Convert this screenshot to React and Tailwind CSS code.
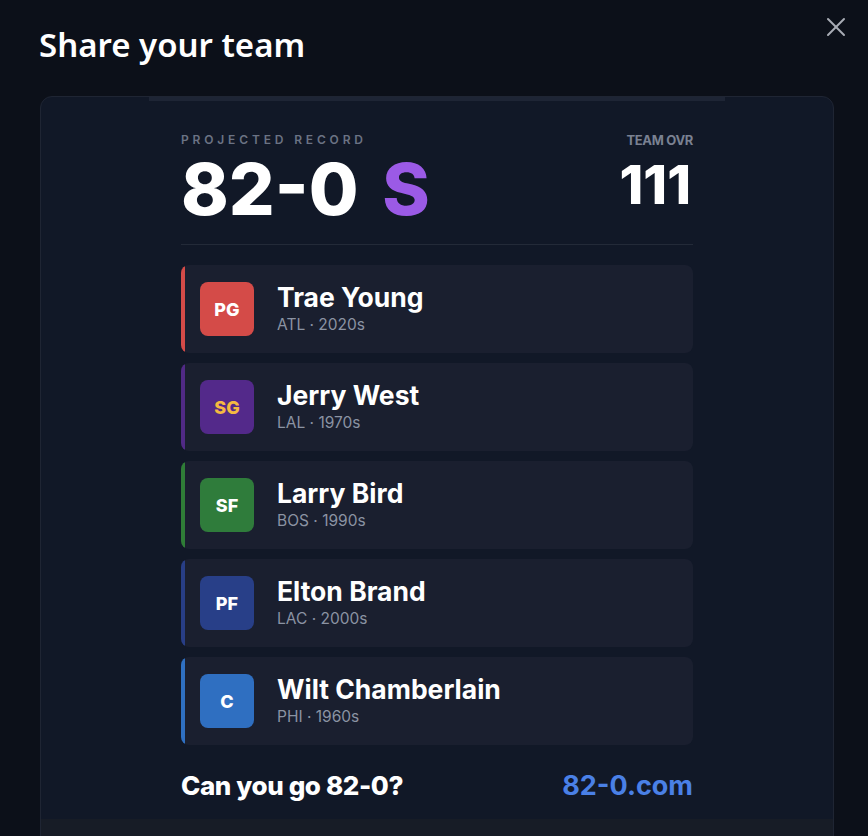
import React from 'react';

// Starting five shown on the share card
const roster = [
  { pos: 'PG', name: 'Trae Young', team: 'ATL', era: '2020s', bar: 'bg-[#d44b48]', badge: 'bg-[#d44b48] text-white' },
  { pos: 'SG', name: 'Jerry West', team: 'LAL', era: '1970s', bar: 'bg-[#512a86]', badge: 'bg-[#53298a] text-[#f5b941]' },
  { pos: 'SF', name: 'Larry Bird', team: 'BOS', era: '1990s', bar: 'bg-[#2f7d37]', badge: 'bg-[#2f7c3b] text-white' },
  { pos: 'PF', name: 'Elton Brand', team: 'LAC', era: '2000s', bar: 'bg-[#283e86]', badge: 'bg-[#283f88] text-white' },
  { pos: 'C', name: 'Wilt Chamberlain', team: 'PHI', era: '1960s', bar: 'bg-[#2f70c2]', badge: 'bg-[#2f6fc1] text-white' },
];

function PlayerRow({ player }) {
  return (
    <div className="flex items-stretch h-[88px] rounded-lg bg-[#1a1f2f] overflow-hidden">
      <div className={`w-1 rounded-full ${player.bar}`} />
      <div className="flex items-center pl-[15px] gap-[23px]">
        <div className={`w-[54px] h-[54px] rounded-lg flex items-center justify-center text-[18px] font-extrabold ${player.badge}`}>
          {player.pos}
        </div>
        <div className="flex flex-col">
          <span className="text-[26.5px] leading-[30px] font-bold text-white">{player.name}</span>
          <span className="text-[15.5px] leading-[22px] mt-[2px] text-[#8b93a3]">
            {player.team} · {player.era}
          </span>
        </div>
      </div>
    </div>
  );
}

export default function App() {
  return (
    <div className="w-[868px] h-[836px] overflow-hidden bg-[#0c1019] relative" style={{ fontFamily: 'Inter, "Noto Sans", sans-serif' }}>
      {/* close button */}
      <button className="absolute right-[22px] top-[17px] text-[#a9adb5]">
        <svg width="20" height="20" viewBox="0 0 20 20" fill="none" stroke="currentColor" strokeWidth="2" strokeLinecap="round">
          <line x1="2" y1="2" x2="18" y2="18" />
          <line x1="18" y1="2" x2="2" y2="18" />
        </svg>
      </button>

      <h1
        className="pl-[39px] pt-[23px] text-[33px] leading-[44px] font-semibold text-white"
        style={{ fontFamily: '"Noto Sans", sans-serif' }}
      >
        Share your team
      </h1>

      <div className="ml-[40px] mt-[29px] w-[794px] rounded-xl border border-[#1f2533] bg-[#111827] overflow-hidden">
        <div className="flex justify-center">
          <div className="w-[576px] border-t-4 border-[#1e2535] px-8 pt-[31px]">
            {/* header: projected record + team overall */}
            <div className="flex justify-between items-start pb-[19px] border-b border-[#232a38]">
              <div>
                <div className="text-[12px] leading-[16px] font-semibold tracking-[0.32em] text-[#6b7384]">PROJECTED RECORD</div>
                <div className="text-[72px] leading-[72px] font-extrabold text-white mt-[5px]">
                  82-0 <span className="ml-[8px] text-[#9b5ae6]">S</span>
                </div>
              </div>
              <div className="flex flex-col items-end">
                <div className="text-[13px] leading-[16px] font-bold tracking-tight text-[#7a8192]">TEAM OVR</div>
                <div className="text-[54px] leading-[56px] font-extrabold text-white mt-[9px] mr-[2px]">111</div>
              </div>
            </div>

            <div className="flex flex-col gap-[10px] mt-[20px]">
              {roster.map((p) => (
                <PlayerRow key={p.pos} player={p} />
              ))}
            </div>

            <div className="flex justify-between items-center mt-[25px] pb-[17px]">
              <span className="text-[26px] leading-[32px] font-extrabold text-white tracking-[-0.015em]">Can you go 82-0?</span>
              <span className="text-[27px] leading-[32px] font-bold text-[#4a80e6]">82-0.com</span>
            </div>
          </div>
        </div>
        <div className="h-[60px] bg-[#171c26]" />
      </div>
    </div>
  );
}
